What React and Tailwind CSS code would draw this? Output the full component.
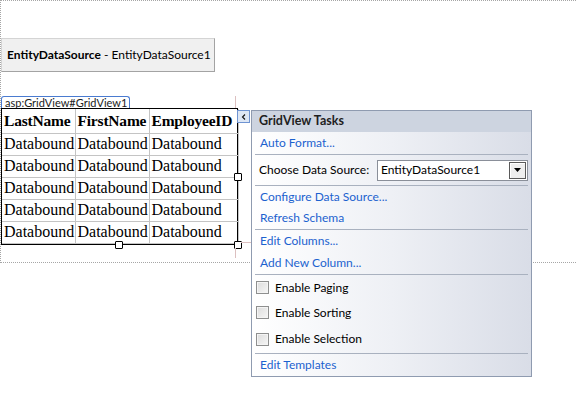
import React from "react";

const UI = { fontFamily: "Lato, 'Noto Sans', sans-serif" };
const SERIF = { fontFamily: "'Liberation Serif', 'Times New Roman', serif" };

function Sep() {
  return <div className="h-px mx-[3px] bg-[#a9b1bf]" />;
}

function LinkRow({ h, children }) {
  return (
    <div className={`${h} flex items-center pl-[8px] text-[#1c62cf] whitespace-nowrap`}>{children}</div>
  );
}

function CheckRow({ h, children }) {
  return (
    <div className={`${h} flex items-center pl-[4px] text-black whitespace-nowrap`}>
      <span className="w-[13px] h-[13px] border border-[#8e8f8f] bg-gradient-to-br from-[#dcdcdc] to-[#f6f6f6] shadow-[inset_0_0_0_1px_#f4f4f4]" />
      <span className="ml-[6px]">{children}</span>
    </div>
  );
}

export default function App() {
  const rows = [0, 1, 2, 3, 4];
  return (
    <div className="relative w-[576px] h-[414px] bg-white overflow-hidden text-[12px]" style={UI}>
      <div className="h-[263px] border-t border-l border-b border-dotted border-[#a6a6a6] pt-[37px]">
        <div className="w-[214px] h-[34px] bg-[#f0f0f0] border border-[#d4d4d4] border-r-[#a3a3a3] border-b-[#a3a3a3] flex items-center pl-[5px] text-[12px] text-black whitespace-nowrap">
          <span className="font-bold">EntityDataSource</span>
          <span>&nbsp;- EntityDataSource1</span>
        </div>
        <div className="mt-[24px] relative">
          <div className="w-[129px] h-[12px] border border-b-0 border-[#4a7bd0] rounded-t-[3px] bg-white flex items-center pl-[3px] text-[11px] leading-none text-[#222] whitespace-nowrap">
            asp:GridView#GridView1
          </div>
          <div className="relative w-[237px] h-[137px] border border-black bg-white">
            <table className="border-collapse table-fixed w-[236px] text-[16px] leading-none text-black" style={SERIF}>
              <colgroup>
                <col className="w-[73px]" />
                <col className="w-[74px]" />
                <col className="w-[89px]" />
              </colgroup>
              <thead>
                <tr className="h-[24px]">
                  {["LastName", "FirstName", "EmployeeID"].map((t) => (
                    <th key={t} className="border border-[#c4c4c4] border-t-0 border-l-0 text-left font-bold text-[15.5px] tracking-[-0.2px] pl-[2px] pr-0 whitespace-nowrap overflow-hidden">
                      {t}
                    </th>
                  ))}
                </tr>
              </thead>
              <tbody>
                {rows.map((r) => (
                  <tr key={r} className="h-[22px]">
                    {[0, 1, 2].map((c) => (
                      <td key={c} className="border border-[#c4c4c4] border-l-0 pl-[2px] pr-0 whitespace-nowrap overflow-hidden">
                        Databound
                      </td>
                    ))}
                  </tr>
                ))}
              </tbody>
            </table>
            <span className="absolute left-[232px] top-[64px] w-[8px] h-[8px] border border-black bg-white rounded-[1px]" />
            <span className="absolute left-[113px] top-[132px] w-[8px] h-[8px] border border-black bg-white rounded-[1px]" />
            <span className="absolute left-[232px] top-[132px] w-[8px] h-[8px] border border-black bg-white rounded-[1px]" />
          </div>
        </div>
      </div>

      {/* guide lines */}
      <div className="absolute left-[235px] top-[96px] w-px h-[12px] bg-[#dcc0c0]" />
      <div className="absolute left-[235px] top-[248px] w-px h-[10px] bg-[#dcc0c0]" />
      <div className="absolute left-[241px] top-[242px] w-[10px] h-px bg-[#dcc0c0]" />

      {/* smart tag */}
      <div className="absolute left-[237px] top-[110px] w-[13px] h-[13px] bg-[#dde7f5] border border-[#6f94d2] flex items-center justify-center">
        <svg width="8" height="8" viewBox="0 0 8 8">
          <path d="M5 1.5 L2.5 4 L5 6.5" stroke="#111" strokeWidth="1.1" fill="none" />
        </svg>
      </div>

      {/* tasks panel */}
      <div className="absolute left-[251px] top-[110px] w-[281px] h-[267px] border border-[#8f9bb0] bg-gradient-to-r from-white via-[#eef0f5] to-[#d9dde7] flex flex-col">
        <div className="h-[21px] bg-[#cdd4e0] flex items-center pl-[7px] font-bold text-[12.5px] text-[#1e1e1e]">GridView Tasks</div>
        <LinkRow h="h-[22px]">Auto Format...</LinkRow>
        <Sep />
        <div className="h-[30px] flex items-center pl-[7px] pr-[3px] text-black whitespace-nowrap">
          <span>Choose Data Source:</span>
          <div className="ml-auto w-[151px] h-[21px] border border-[#8a8f99] bg-white flex items-center pl-[3px] pr-px">
            <span>EntityDataSource1</span>
            <div className="ml-auto w-[17px] h-[17px] border border-[#5a5a5a] bg-[#eeeeee] shadow-[inset_1px_1px_0_#ffffff] flex items-center justify-center">
              <svg width="7" height="4" viewBox="0 0 7 4">
                <path d="M0 0 H7 L3.5 4 Z" fill="#000" />
              </svg>
            </div>
          </div>
        </div>
        <Sep />
        <LinkRow h="h-[21px]">Configure Data Source...</LinkRow>
        <LinkRow h="h-[22px]">Refresh Schema</LinkRow>
        <Sep />
        <LinkRow h="h-[22px]">Edit Columns...</LinkRow>
        <LinkRow h="h-[22px]">Add New Column...</LinkRow>
        <Sep />
        <CheckRow h="h-[25px]">Enable Paging</CheckRow>
        <CheckRow h="h-[25px]">Enable Sorting</CheckRow>
        <CheckRow h="h-[28px]">Enable Selection</CheckRow>
        <Sep />
        <LinkRow h="h-[22px]">Edit Templates</LinkRow>
      </div>
    </div>
  );
}
